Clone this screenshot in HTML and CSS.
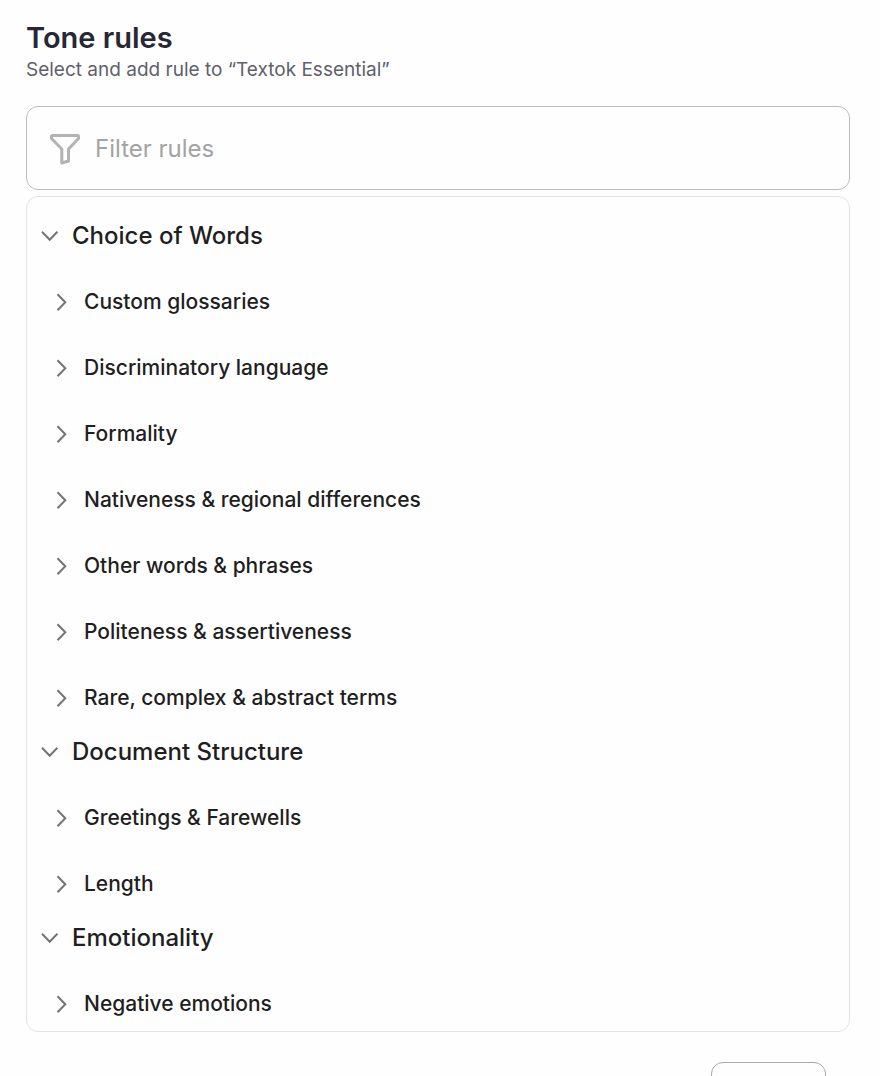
FILE: index.html
```html
<!DOCTYPE html>
<html lang="en">
<head>
    <meta charset="UTF-8">
    <meta name="viewport" content="width=device-width, initial-scale=1.0">
    <title>Tone rules</title>
    <link rel="stylesheet" href="styles.css">
</head>
<body>

    <svg class="sprite" aria-hidden="true">
        <symbol id="chevron-down" viewBox="0 0 20 20">
            <path d="M2 6.8 L9.7 14.8 L17.4 6.8" />
        </symbol>
        <symbol id="chevron-right" viewBox="0 0 20 20">
            <path d="M5.5 3.2 L13.3 11.2 L5.5 19.2" />
        </symbol>
    </svg>

    <main class="panel">
        <header class="panel-header">
            <h1>Tone rules</h1>
            <p class="subtitle">Select and add rule to “Textok Essential”</p>
        </header>

        <label class="filter">
            <svg class="filter-icon" viewBox="0 0 32 32" aria-hidden="true">
                <path d="M3.5 3.5 H28.5 Q29.5 3.5 29.5 4.5 V6.5 L19.5 17 V29 L12.8 31 V17 L2.5 6.5 V4.5 Q2.5 3.5 3.5 3.5 Z" />
            </svg>
            <input type="text" placeholder="Filter rules" aria-label="Filter rules">
        </label>

        <div class="rules">
            <section class="group">
                <button class="row row-group" aria-expanded="true"><svg class="chevron"><use href="#chevron-down" /></svg>Choice of Words</button>
                <div class="items">
                    <button class="row row-item" aria-expanded="false"><svg class="chevron"><use href="#chevron-right" /></svg>Custom glossaries</button>
                    <button class="row row-item" aria-expanded="false"><svg class="chevron"><use href="#chevron-right" /></svg>Discriminatory language</button>
                    <button class="row row-item" aria-expanded="false"><svg class="chevron"><use href="#chevron-right" /></svg>Formality</button>
                    <button class="row row-item" aria-expanded="false"><svg class="chevron"><use href="#chevron-right" /></svg>Nativeness &amp; regional differences</button>
                    <button class="row row-item" aria-expanded="false"><svg class="chevron"><use href="#chevron-right" /></svg>Other words &amp; phrases</button>
                    <button class="row row-item" aria-expanded="false"><svg class="chevron"><use href="#chevron-right" /></svg>Politeness &amp; assertiveness</button>
                    <button class="row row-item" aria-expanded="false"><svg class="chevron"><use href="#chevron-right" /></svg>Rare, complex &amp; abstract terms</button>
                </div>
            </section>

            <section class="group">
                <button class="row row-group" aria-expanded="true"><svg class="chevron"><use href="#chevron-down" /></svg>Document Structure</button>
                <div class="items">
                    <button class="row row-item" aria-expanded="false"><svg class="chevron"><use href="#chevron-right" /></svg>Greetings &amp; Farewells</button>
                    <button class="row row-item" aria-expanded="false"><svg class="chevron"><use href="#chevron-right" /></svg>Length</button>
                </div>
            </section>

            <section class="group">
                <button class="row row-group" aria-expanded="true"><svg class="chevron"><use href="#chevron-down" /></svg>Emotionality</button>
                <div class="items">
                    <button class="row row-item" aria-expanded="false"><svg class="chevron"><use href="#chevron-right" /></svg>Negative emotions</button>
                </div>
            </section>
        </div>

        <footer class="actions">
            <button class="close-button" aria-label="Close"></button>
        </footer>
    </main>

</body>
</html>
```

FILE: styles.css
```css
:root {
    --heading-color: #272735;
    --text-color: #1f1f1f;
    --muted-color: #60606b;
    --placeholder-color: #a3a3a3;
    --icon-color: #747474;
    --border-color: #bdbdbd;
    --border-light: #e3e3e3;
}

* {
    box-sizing: border-box;
}

body {
    margin: 0;
    height: 100vh;
    overflow: hidden;
    background-color: #fefefe;
    color: var(--text-color);
    font-family: Inter, "Liberation Sans", sans-serif;
}

.sprite {
    display: none;
}

.panel {
    padding: 20px 30px 20px 26px;
}

h1 {
    margin: 0;
    font-size: 29px;
    line-height: 36px;
    font-weight: 600;
    color: var(--heading-color);
}

.subtitle {
    margin: 0;
    font-size: 19px;
    line-height: 28px;
    color: var(--muted-color);
}

.filter {
    display: flex;
    align-items: center;
    gap: 14px;
    height: 84px;
    margin-top: 22px;
    padding: 0 22px;
    border: 1px solid var(--border-color);
    border-radius: 12px;
}

.filter-icon {
    flex: none;
    width: 32px;
    height: 32px;
    overflow: visible;
    fill: none;
    stroke: #b3b3b6;
    stroke-width: 3;
    stroke-linejoin: round;
}

.filter input {
    flex: 1;
    min-width: 0;
    padding: 0;
    border: none;
    outline: none;
    background: none;
    color: var(--text-color);
    font: inherit;
    font-size: 24px;
}

.filter input::placeholder {
    color: var(--placeholder-color);
}

.rules {
    display: flex;
    flex-direction: column;
    gap: 12px;
    margin-top: 6px;
    padding: 17px 13px 7px;
    border: 1px solid var(--border-light);
    border-radius: 12px;
}

.group,
.items {
    display: flex;
    flex-direction: column;
    gap: 24px;
}

.items {
    padding-left: 12px;
}

.row {
    display: flex;
    align-items: center;
    gap: 12px;
    height: 42px;
    padding: 0;
    border: none;
    background: none;
    color: inherit;
    font-family: inherit;
    font-weight: 500;
    text-align: left;
    cursor: pointer;
}

.row-group {
    font-size: 24px;
}

.row-item {
    font-size: 21px;
}

.chevron {
    flex: none;
    width: 20px;
    height: 20px;
    fill: none;
    stroke: var(--icon-color);
    stroke-width: 2;
}

.actions {
    display: flex;
    justify-content: flex-end;
    margin-top: 30px;
    padding-right: 24px;
}

.close-button {
    width: 115px;
    height: 60px;
    border: 1px solid #a9a9a9;
    border-radius: 12px;
    background: none;
    cursor: pointer;
}
```
